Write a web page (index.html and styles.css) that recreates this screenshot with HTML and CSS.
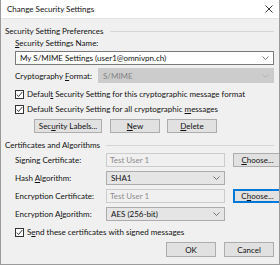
FILE: index.html
```html
<!DOCTYPE html>
<html lang="en">
<head>
    <meta charset="UTF-8">
    <title>Change Security Settings</title>
    <link rel="stylesheet" href="styles.css">
</head>
<body>
    <div class="window">
        <div class="title-bar">
            <span class="title">Change Security Settings</span>
            <svg class="close" width="8" height="8" viewBox="0 0 8 8"><path d="M0.5 0.5 L7.5 7.5 M7.5 0.5 L0.5 7.5" stroke="#222" stroke-width="0.9"/></svg>
        </div>

        <div class="content">
            <div class="group-title"><span>Security Setting Preferences</span><span class="rule"></span></div>

            <div class="field-label"><u>S</u>ecurity Settings Name:</div>
            <div class="combo combo-name">
                <span>My S/MIME Settings (user1@omnivpn.ch)</span>
                <svg class="arrow" width="7" height="4" viewBox="0 0 7 4"><path d="M0.5 0.5 L3.5 3.5 L6.5 0.5" fill="none" stroke="#555" stroke-width="0.8"/></svg>
            </div>

            <div class="format-row">
                <span class="row-label">Cryptography <u>F</u>ormat:</span>
                <div class="combo disabled">
                    <span>S/MIME</span>
                    <svg class="arrow" width="7" height="4" viewBox="0 0 7 4"><path d="M0.5 0.5 L3.5 3.5 L6.5 0.5" fill="none" stroke="#aaa" stroke-width="0.8"/></svg>
                </div>
            </div>

            <label class="check first">
                <svg width="9" height="9" viewBox="0 0 9 9"><rect x="0.5" y="0.5" width="8" height="8" fill="#fff" stroke="#333"/><path d="M1.8 4.6 L3.6 6.5 L7.3 2" fill="none" stroke="#222" stroke-width="0.9"/></svg>
                <span>Defaul<u>t</u> Security Setting for this cryptographic message format</span>
            </label>
            <label class="check">
                <svg width="9" height="9" viewBox="0 0 9 9"><rect x="0.5" y="0.5" width="8" height="8" fill="#fff" stroke="#333"/><path d="M1.8 4.6 L3.6 6.5 L7.3 2" fill="none" stroke="#222" stroke-width="0.9"/></svg>
                <span>Default Security Setting for all cryptographic <u>m</u>essages</span>
            </label>

            <div class="button-row">
                <button class="btn btn-labels">Sec<u>u</u>rity Labels...</button>
                <button class="btn"><u>N</u>ew</button>
                <button class="btn"><u>D</u>elete</button>
            </div>

            <div class="group-title second"><span>Certificates and Algorithms</span><span class="rule"></span></div>

            <div class="cert-grid">
                <span class="row-label">Signing Certificate:</span>
                <div class="textbox">Test User 1</div>
                <button class="btn"><u>C</u>hoose...</button>

                <span class="row-label">Hash <u>A</u>lgorithm:</span>
                <div class="combo list">
                    <span>SHA1</span>
                    <svg class="arrow" width="7" height="4" viewBox="0 0 7 4"><path d="M0.5 0.5 L3.5 3.5 L6.5 0.5" fill="none" stroke="#555" stroke-width="0.8"/></svg>
                </div>
                <span></span>

                <span class="row-label">Encryption Certificate:</span>
                <div class="textbox">Test User 1</div>
                <button class="btn focused">C<u>h</u>oose...</button>

                <span class="row-label">Encryption A<u>l</u>gorithm:</span>
                <div class="combo list">
                    <span>AES (256-bit)</span>
                    <svg class="arrow" width="7" height="4" viewBox="0 0 7 4"><path d="M0.5 0.5 L3.5 3.5 L6.5 0.5" fill="none" stroke="#555" stroke-width="0.8"/></svg>
                </div>
                <span></span>
            </div>

            <label class="check send">
                <svg width="9" height="9" viewBox="0 0 9 9"><rect x="0.5" y="0.5" width="8" height="8" fill="#fff" stroke="#333"/><path d="M1.8 4.6 L3.6 6.5 L7.3 2" fill="none" stroke="#222" stroke-width="0.9"/></svg>
                <span>S<u>e</u>nd these certificates with signed messages</span>
            </label>

            <div class="footer">
                <button class="btn">OK</button>
                <button class="btn">Cancel</button>
            </div>
        </div>
    </div>
</body>
</html>
```

FILE: styles.css
```css
body {
    margin: 0;
    padding: 0;
    background: #f0f0f0;
    font-family: Lato, 'Open Sans', sans-serif;
    font-size: 8px;
    color: #111;
}

.window {
    width: 280px;
    height: 265px;
    box-sizing: border-box;
    border-left: 1px solid #9a9a9a;
    border-right: 1px solid #9a9a9a;
    border-bottom: 1px solid #9a9a9a;
    background: #f0f0f0;
    overflow: hidden;
}

.title-bar {
    height: 19px;
    background: #fff;
    display: flex;
    align-items: center;
    justify-content: space-between;
    padding: 0 6px 0 6px;
    border-bottom: 1px solid #e3e3e3;
    box-sizing: border-box;
}

.title {
    font-size: 8px;
}

.content {
    padding: 0 5px 0 4px;
    display: flex;
    flex-direction: column;
}

.group-title {
    display: flex;
    align-items: center;
    gap: 6px;
    height: 10px;
    margin-top: 7px;
}

.group-title.second {
    margin-top: 7px;
}

.rule {
    flex: 1;
    border-top: 1px solid #d5d5d5;
}

.field-label {
    height: 10px;
    line-height: 10px;
    margin: 2px 0 0 10px;
}

.combo {
    display: flex;
    align-items: center;
    justify-content: space-between;
    box-sizing: border-box;
    height: 14px;
    padding: 0 4px 0 4px;
    background: #fff;
    border: 1px solid #7a7a7a;
}

.combo-name {
    margin: 3px 0 0 10px;
}

.combo.disabled {
    background: #cccccc;
    border-color: #cccccc;
    color: #838383;
    height: 15px;
    flex: 1;
}

.combo.list {
    background: #e5e5e5;
    border-color: #acacac;
}

.format-row {
    display: flex;
    align-items: center;
    margin: 3px 0 0 10px;
}

.row-label {
    white-space: nowrap;
}

.format-row .row-label {
    width: 83px;
}

.check {
    display: flex;
    align-items: center;
    gap: 3px;
    height: 10px;
    margin: 5px 0 0 10px;
}

.check.first {
    margin-top: 6px;
}

.check svg {
    flex: none;
}

.button-row {
    display: flex;
    gap: 7px;
    margin: 5px 0 0 29px;
}

.btn {
    box-sizing: border-box;
    height: 14px;
    width: 50px;
    padding: 0;
    font-family: inherit;
    font-size: 8px;
    color: #111;
    background: #e1e1e1;
    border: 1px solid #adadad;
}

.btn-labels {
    width: 68px;
    margin-right: 1px;
}

.btn.focused {
    border: 2px solid #0078d7;
}

.cert-grid {
    display: grid;
    grid-template-columns: 83px 119px 49px;
    column-gap: 8px;
    row-gap: 4px;
    grid-auto-rows: 14px;
    align-items: center;
    margin: 3px 0 0 10px;
}

.cert-grid .combo,
.cert-grid .textbox,
.cert-grid .btn {
    height: 14px;
    width: 100%;
}

.textbox {
    box-sizing: border-box;
    height: 14px;
    padding: 0 3px;
    display: flex;
    align-items: center;
    background: #f0f0f0;
    border: 1px solid #cccccc;
    color: #8c8c8c;
}

.check.send {
    margin-top: 6px;
}

.footer {
    display: flex;
    justify-content: flex-end;
    gap: 8px;
    margin-top: 5px;
}

.footer .btn {
    height: 15px;
}
```
